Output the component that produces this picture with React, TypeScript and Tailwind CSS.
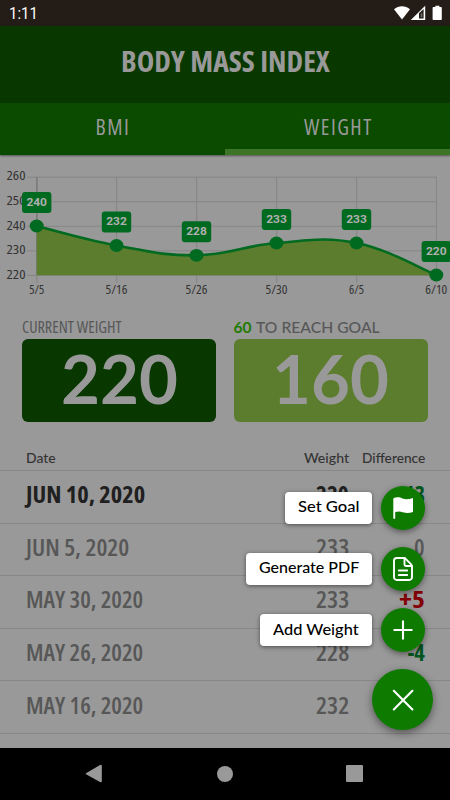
import { useLayoutEffect, useRef, useState, type ReactNode } from 'react';

/* Condensed lettering: squeezes its text to the given width. */
function Fit({ w, children, className = '' }: { w: number; children: ReactNode; className?: string }) {
  const ref = useRef<HTMLSpanElement>(null);
  const [scale, setScale] = useState(1);
  useLayoutEffect(() => {
    if (ref.current) setScale(w / ref.current.offsetWidth);
  }, [w]);
  return (
    <span className={`inline-flex shrink-0 ${className}`} style={{ width: w }}>
      <span ref={ref} className="inline-block shrink-0 origin-left whitespace-nowrap" style={{ transform: `scaleX(${scale})` }}>
        {children}
      </span>
    </span>
  );
}

const points = [
  { x: 36.7, y: 226, v: 240, d: '5/5', w: 15 },
  { x: 116.5, y: 245.5, v: 232, d: '5/16', w: 22 },
  { x: 196.5, y: 255.3, v: 228, d: '5/26', w: 22 },
  { x: 276.5, y: 243, v: 233, d: '5/30', w: 22 },
  { x: 356.5, y: 243, v: 233, d: '6/5', w: 15 },
  { x: 436.3, y: 275, v: 220, d: '6/10', w: 22 },
];
const levels = [260, 250, 240, 230, 220];
const curve =
  'M36.7 226 C52.5 230 84.5 239.6 116.5 245.5 S164.5 255.8 196.5 255.3 S244.5 245.5 276.5 243 S324.5 236.6 356.5 243 S420.3 268.6 436.3 275';

function Chart() {
  return (
    <svg width="450" height="155" viewBox="0 155 450 155" className="block font-['Open_Sans',sans-serif] [font-stretch:75%]">
      <g stroke="#868686" strokeWidth="1">
        {levels.map((l, i) => (
          <path key={l} d={`M27 ${177.2 + i * 24.55}H437`} />
        ))}
        {points.map((p) => (
          <path key={p.x} d={`M${p.x + 0.2} 177V283`} />
        ))}
      </g>
      <path d="M36.9 177V275" stroke="#777" strokeWidth="1.2" />
      {levels.map((l, i) => (
        <text key={l} x="6.5" y={180.3 + i * 24.6} fontSize="12" fill="#333" textLength="19" lengthAdjust="spacingAndGlyphs">
          {l}
        </text>
      ))}
      <path d={`${curve} V275.3 H36.7Z`} fill="#5c7d2d" />
      <path d={curve} fill="none" stroke="#006a20" strokeWidth="2.6" />
      {points.map((p) => (
        <g key={p.x}>
          <ellipse cx={p.x} cy={p.y} rx="7" ry="6.4" fill="#006a20" />
          <rect x={p.x - 14.7} y={p.y - 34} width="29.4" height="21" rx="3" fill="#006a20" />
          <text
            x={p.x - 10.3}
            y={p.y - 20.2}
            fontSize="11"
            fontWeight="700"
            fill="#b0b0b0"
            textLength="20.6"
            lengthAdjust="spacingAndGlyphs"
            className="font-['Roboto',sans-serif] [font-stretch:100%]"
          >
            {p.v}
          </text>
          <text x={p.x - p.w / 2} y="294" fontSize="12" fill="#333" textLength={p.w} lengthAdjust="spacingAndGlyphs">
            {p.d}
          </text>
        </g>
      ))}
    </svg>
  );
}

const rows = [
  { date: 'JUN 10, 2020', w: 119.5, weight: '220', diff: '-13', dw: 27, tone: 'text-[#00561d]' },
  { date: 'JUN 5, 2020', w: 103.5, weight: '233', diff: '0', dw: 10.5, tone: 'text-[#575757]' },
  { date: 'MAY 30, 2020', w: 117, weight: '233', diff: '+5', dw: 25.5, tone: 'text-[#840006]' },
  { date: 'MAY 26, 2020', w: 117, weight: '228', diff: '-4', dw: 17, tone: 'text-[#00561d]' },
  { date: 'MAY 16, 2020', w: 117, weight: '232', diff: '', dw: 0, tone: '' },
];

function FlagIcon() {
  return (
    <svg width="22" height="24" viewBox="0 0 22 24" fill="#fff">
      <path d="M1.3 2.4C5.5.4 8.1 1.4 10.5 2.4c3.2 1.2 6.1 1 10.5-.4v14c-3.8 1.3-7 1.3-10.2.2-2.7-.9-5-.9-7.6-.1v6c0 1.2-1.9 1.2-1.9 0z" />
    </svg>
  );
}

function DocIcon() {
  return (
    <svg width="20" height="24" viewBox="0 0 20 24" fill="none" stroke="#fff" strokeWidth="1.9" strokeLinecap="round" strokeLinejoin="round">
      <path d="M11.2 1H3.8A2.8 2.8 0 0 0 1 3.8v16.4A2.8 2.8 0 0 0 3.8 23h12.4a2.8 2.8 0 0 0 2.8-2.8V9.4a2.4 2.4 0 0 0-.7-1.7L12.7 1.8A2.2 2.2 0 0 0 11.2 1z" />
      <path d="M11.5 1.5v6.1c0 .9.6 1.4 1.4 1.4h5.6M5.8 13.5h8.4M5.8 18h8.4" />
    </svg>
  );
}

function CrossIcon({ diagonal = false }: { diagonal?: boolean }) {
  return (
    <svg width="24" height="24" viewBox="0 0 24 24" stroke="#fff" strokeWidth="2.1" strokeLinecap="round">
      <path d={diagonal ? 'M2.8 2.8l18.6 18.6M21.4 2.8L2.8 21.4' : 'M12 3.4v17.4M3.3 12h17.4'} />
    </svg>
  );
}

const actions = [
  { label: 'Set Goal', w: 61, icon: <FlagIcon /> },
  { label: 'Generate PDF', w: 100, icon: <DocIcon /> },
  { label: 'Add Weight', w: 86, icon: <CrossIcon /> },
];

export default function App() {
  return (
    <div className="relative flex h-[800px] w-[450px] flex-col overflow-hidden bg-[#999] font-['Lato','Open_Sans',sans-serif] text-[#333]">
      <div className="flex h-[26px] shrink-0 items-center justify-between bg-[#241c16] pr-[8px] pl-[9px] text-white">
        <Fit w={29} className="pt-[2px] font-['Roboto',sans-serif] text-[16.5px] leading-5">1:11</Fit>
        <svg width="48" height="16" viewBox="1 0 48 16" fill="#fff">
          <path d="M1 4.2C5.5.1 12.5.1 17 4.2L9 14.4z" />
          <path fillRule="evenodd" d="M17.8 15L32.2.8V15zM26 8.2v5.2h4.6V3.9z" />
          <path d="M27.7 9L29.3 7.4v4.8h-1.6z" opacity=".35" />
          <path d="M40.6 2h1.8V.8h4V2h1.4c.7 0 1 .4 1 1v11c0 .7-.4 1-1 1h-7.2c-.7 0-1-.4-1-1V3c0-.7.4-1 1-1z" />
        </svg>
      </div>

      <header className="flex h-[77px] shrink-0 items-center justify-center bg-[#083800] pb-[7px]">
        <Fit w={209} className="font-['Open_Sans',sans-serif] text-[28px] leading-8 font-bold text-[#999] [font-stretch:75%]">BODY MASS INDEX</Fit>
      </header>

      <nav className="grid h-[52px] shrink-0 grid-cols-2 bg-[#0a4b00] font-['Open_Sans',sans-serif] text-[21.5px] leading-6 font-medium text-[#999] shadow-[0_1px_2px_rgba(0,0,0,0.45)] [font-stretch:75%]">
        <div className="flex items-start justify-center pt-[12px] pl-[1px]">
          <Fit w={35}><span className="tracking-[1.5px]">BMI</span></Fit>
        </div>
        <div className="flex items-start justify-center border-b-[6px] border-[#3d7527] pt-[12px] pl-[2px]">
          <Fit w={69}><span className="tracking-[1.5px]">WEIGHT</span></Fit>
        </div>
      </nav>

      <Chart />

      <section className="flex shrink-0 gap-[17.5px] px-[22px] pt-[8px]">
        <div className="w-[194.5px]">
          <div className="h-[21px] font-['Open_Sans',sans-serif] text-[15.5px] leading-[18px] font-medium text-[#575757] [font-stretch:75%]"><Fit w={100}>CURRENT WEIGHT</Fit></div>
          <div className="flex h-[83px] items-center justify-center rounded-[6px] bg-[#083800] pb-[3px] text-[66px] leading-none font-bold text-[#999]">
            <Fit w={117}>220</Fit>
          </div>
        </div>
        <div className="w-[195px]">
          <div className="flex h-[21px] gap-[4px] text-[15.5px] leading-[18px] text-[#575757]">
            <Fit w={18} className="font-bold text-[#1e7b00]">60</Fit>
            <Fit w={123.5} className="font-medium">TO REACH GOAL</Fit>
          </div>
          <div className="flex h-[83px] items-center justify-center rounded-[6px] bg-[#5c7d2d] pb-[3px] text-[66px] leading-none font-bold text-[#999]">
            <Fit w={117}>160</Fit>
          </div>
        </div>
      </section>

      <div className="flex h-[49px] shrink-0 items-end border-b border-[#878787] pr-[25.5px] pb-[2.5px] pl-[26px] text-[13.5px] leading-5 font-medium text-[#333]">
        <Fit w={30} className="mr-auto">Date</Fit>
        <Fit w={45}>Weight</Fit>
        <Fit w={63} className="ml-[13px]">Difference</Fit>
      </div>

      {rows.map((r, i) => (
        <div
          key={r.date}
          className={`flex h-[52.6px] shrink-0 items-center border-b border-[#878787] pr-[25.5px] pb-[3px] pl-[26px] font-['Open_Sans',sans-serif] text-[22.5px] leading-7 [font-stretch:75%] ${i === 0 ? 'font-bold text-[#202020]' : 'font-semibold text-[#575757]'}`}
        >
          <Fit w={r.w} className="mr-auto">{r.date}</Fit>
          <Fit w={33}>{r.weight}</Fit>
          <div className={`flex w-[76px] justify-end ${r.tone}`}>
            {r.diff && <Fit w={r.dw} className={r.diff === '0' ? 'font-semibold' : 'font-bold'}>{r.diff}</Fit>}
          </div>
        </div>
      ))}

      <div className="absolute top-[485.5px] right-[17px] flex flex-col items-end">
        {actions.map((a) => (
          <div key={a.label} className="mr-[8px] mb-[17.3px] flex h-[44px] items-center gap-[9px]">
            <div className="flex h-8 items-center rounded-[4px] bg-white px-[13px] pb-[3px] text-[16px] leading-5 font-medium text-black shadow-[0_1px_4px_rgba(0,0,0,0.5)]">
              <Fit w={a.w}>{a.label}</Fit>
            </div>
            <div className="flex size-[44px] items-center justify-center rounded-full bg-[#0e7a00] shadow-[0_2px_6px_rgba(0,0,0,0.45)]">{a.icon}</div>
          </div>
        ))}
        <div className="flex size-[61px] items-center justify-center rounded-full bg-[#0e7a00] shadow-[0_3px_8px_rgba(0,0,0,0.45)]">
          <CrossIcon diagonal />
        </div>
      </div>

      <footer className="absolute inset-x-0 bottom-0 flex h-[52.5px] items-center justify-between bg-black pr-[87px] pl-[85px]">
        <svg width="18" height="20" viewBox="0 0 18 20" fill="#999"><path d="M1 9.2L15 1.1q1.8-.9 1.8.8v15.4q0 1.6-1.8.7L1 10.2q-.7-.5 0-1z" /></svg>
        <div className="size-4 rounded-full bg-[#999]" />
        <div className="size-[17px] rounded-[1px] bg-[#999]" />
      </footer>
    </div>
  );
}
